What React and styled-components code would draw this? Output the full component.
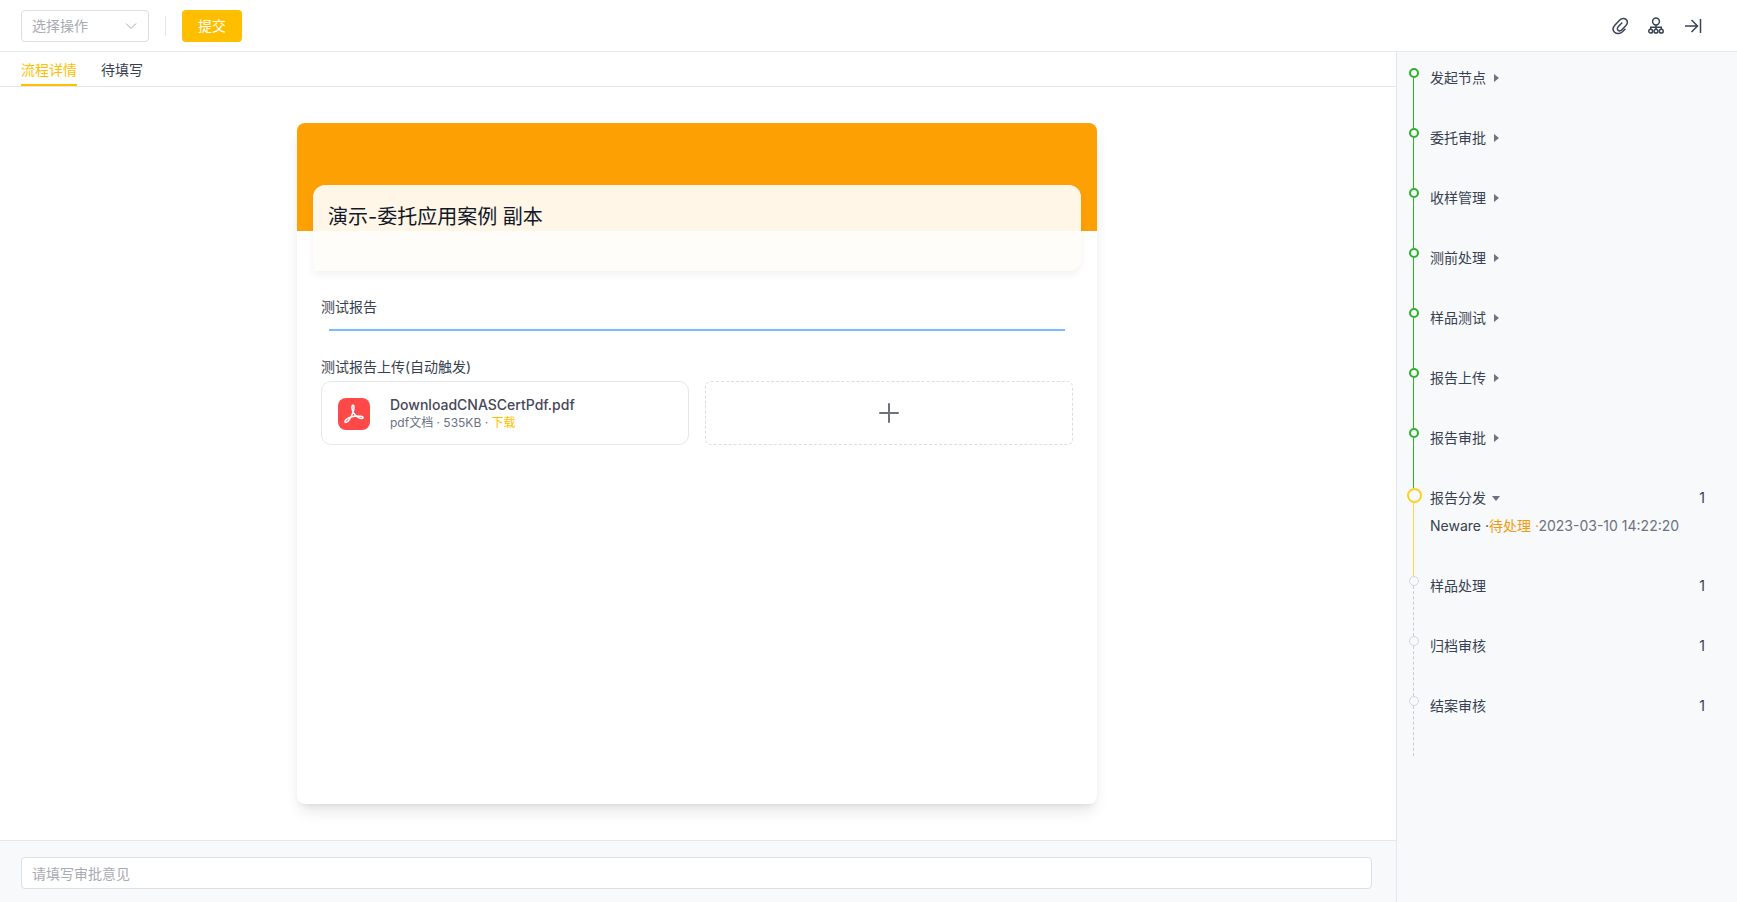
import React, { useState } from "react";
import styled, { createGlobalStyle, css } from "styled-components";

const colorPrimario = "#ffbf00";
const colorBorde = "#e4e7ed";
const colorFondo = "#f8f9fb";
const colorTexto = "#374151";
const colorGris = "#6b7280";

const GlobalStyle = createGlobalStyle`
  *, *::before, *::after {
    box-sizing: border-box;
  }
  body {
    margin: 0;
    font-family: Inter, "Noto Sans CJK SC", sans-serif;
    font-size: 14px;
    line-height: 20px;
    color: ${colorTexto};
    background: white;
  }
  button, input, select {
    font: inherit;
    color: inherit;
  }
  button {
    border: 0;
    padding: 0;
    background: none;
    cursor: pointer;
  }
  svg {
    display: block;
  }
`;

const Page = styled.div`
  display: flex;
  flex-direction: column;
  min-height: 100vh;
`;

const Toolbar = styled.header`
  display: flex;
  align-items: center;
  justify-content: space-between;
  padding: 10px 35px 9px 21px;
  border-bottom: 1px solid ${colorBorde};
`;

const Group = styled.div`
  display: flex;
  align-items: center;
  gap: ${({ $gap }) => $gap}px;
`;

const SelectBox = styled.label`
  display: grid;
  align-items: center;
  width: 128px;
  height: 32px;
  border: 1px solid #dcdfe6;
  border-radius: 4px;
  > * {
    grid-area: 1 / 1;
  }
  svg {
    justify-self: end;
    margin-right: 11px;
    pointer-events: none;
  }
`;

const Select = styled.select`
  appearance: none;
  width: 100%;
  height: 30px;
  padding: 0 30px 0 10px;
  border: 0;
  background: transparent;
  color: #a8abb2;
`;

const Separator = styled.span`
  width: 1px;
  height: 20px;
  background: ${colorBorde};
`;

const SubmitButton = styled.button`
  width: 60px;
  height: 32px;
  border-radius: 4px;
  background: ${colorPrimario};
  color: white;
`;

const Body = styled.div`
  display: flex;
  flex: 1;
`;

const Main = styled.main`
  display: flex;
  flex-direction: column;
  flex: 1;
  min-width: 0;
`;

const Tabs = styled.nav`
  display: flex;
  gap: 24px;
  padding: 0 21px;
  border-bottom: 1px solid ${colorBorde};
`;

const Tab = styled.button`
  height: 34px;
  padding-top: 4px;
  border-bottom: 2px solid transparent;
  ${({ $active }) =>
    $active &&
    css`
      color: ${colorPrimario};
      border-color: ${colorPrimario};
    `}
`;

const Canvas = styled.div`
  display: flex;
  justify-content: center;
  flex: 1;
  padding: 36px 26px 36px 24px;
`;

const Card = styled.section`
  width: 100%;
  max-width: 800px;
  border-radius: 8px;
  background: white;
  box-shadow: 0 10px 15px -3px rgba(0, 0, 0, 0.1),
    0 4px 6px -4px rgba(0, 0, 0, 0.1);
`;

const Banner = styled.div`
  padding: 62px 16px 0;
  border-radius: 8px 8px 0 0;
  background: linear-gradient(#fda004, #fda004) no-repeat 0 0 / 100% 108px;
`;

const Title = styled.h1`
  height: 86px;
  margin: 0;
  padding: 16px 15px;
  border-radius: 12px 12px 12px 0;
  background: rgba(255, 253, 249, 0.93);
  box-shadow: 0 4px 8px rgba(0, 0, 0, 0.05);
  color: #111827;
  font-size: 20px;
  line-height: 32px;
  font-weight: 400;
`;

const Fields = styled.div`
  padding: 26px 24px;
`;

const FieldTitle = styled.h2`
  margin: 0;
  font-size: 14px;
  line-height: 20px;
  font-weight: 400;
`;

const Divider = styled.hr`
  height: 2px;
  margin: 12px 8px 26px;
  border: 0;
  background: #79bbff;
`;

const Files = styled.div`
  display: grid;
  grid-template-columns: 1fr 1fr;
  gap: 16px;
  margin-top: 4px;
`;

const FileCard = styled.article`
  display: flex;
  align-items: center;
  gap: 20px;
  height: 64px;
  padding: 2px 16px 0;
  border: 1px solid #e5e7eb;
  border-radius: 10px;
`;

const FileName = styled.div`
  color: #44475b;
  font-weight: 500;
  line-height: 18px;
`;

const FileMeta = styled.div`
  color: ${colorGris};
  font-size: 12px;
  line-height: 18px;
  a {
    color: ${colorPrimario};
    text-decoration: none;
  }
`;

const AddButton = styled.button`
  display: flex;
  align-items: center;
  justify-content: center;
  height: 64px;
  border: 1px dashed #dcdce4;
  border-radius: 6px;
`;

const Footer = styled.footer`
  padding: 16px 24px 13px 21px;
  border-top: 1px solid ${colorBorde};
  background: ${colorFondo};
`;

const Comment = styled.input`
  display: block;
  width: 100%;
  height: 32px;
  padding: 0 10px;
  border: 1px solid #dcdfe6;
  border-radius: 4px;
  background: white;
  &::placeholder {
    color: #a8abb2;
  }
`;

const Aside = styled.aside`
  width: 341px;
  padding: 16px 32px 16px 10px;
  border-left: 1px solid ${colorBorde};
  background: ${colorFondo};
`;

const Steps = styled.ol`
  margin: 0;
  padding: 0;
  list-style: none;
`;

const Step = styled.li`
  display: flex;
  gap: 8px;
  min-height: ${({ $open }) => ($open ? 88 : 60)}px;
`;

const states = {
  done: css`
    --dot: 2px solid #2fb12f;
    --line: 1px solid #2fb12f;
  `,
  current: css`
    --dot: 2px solid #fdd022;
    --line: 1px solid #fdd35a;
  `,
  pending: css`
    --dot: 1px solid #d3d6dd;
    --line: 1px dashed #c8cbd2;
  `,
};

const Rail = styled.div`
  display: flex;
  flex-direction: column;
  width: 15px;
  ${({ $state }) => states[$state]}
  &::before {
    content: "";
    width: ${({ $state }) => ($state === "current" ? 15 : 10)}px;
    height: ${({ $state }) => ($state === "current" ? 15 : 10)}px;
    margin-left: ${({ $state }) => ($state === "current" ? 0 : 2)}px;
    border: var(--dot);
    border-radius: 50%;
  }
  &::after {
    content: "";
    flex: 1;
    margin-left: 6px;
    border-left: var(--line);
  }
`;

const StepBody = styled.div`
  flex: 1;
`;

const StepHead = styled.div`
  display: flex;
  justify-content: space-between;
`;

const StepToggle = styled.button`
  display: flex;
  align-items: center;
  gap: 8px;
`;

const Arrow = styled.span`
  border: 4px solid transparent;
  ${({ $open }) =>
    $open
      ? css`
          border-top: 5px solid ${colorGris};
          border-bottom: 0;
          margin-left: -2px;
        `
      : css`
          border-left: 5px solid ${colorGris};
          border-right: 0;
        `}
`;

const Detail = styled.p`
  margin: 8px 0 0;
  time {
    color: ${colorGris};
  }
`;

const Status = styled.span`
  color: #f29a0b;
`;

const steps = [
  { name: "发起节点", state: "done" },
  { name: "委托审批", state: "done" },
  { name: "收样管理", state: "done" },
  { name: "测前处理", state: "done" },
  { name: "样品测试", state: "done" },
  { name: "报告上传", state: "done" },
  { name: "报告审批", state: "done" },
  { name: "报告分发", state: "current", count: 1 },
  { name: "样品处理", state: "pending", count: 1 },
  { name: "归档审核", state: "pending", count: 1 },
  { name: "结案审核", state: "pending", count: 1 },
];

const ChevronIcon = () => (
  <svg width="12" height="12" viewBox="0 0 12 12" fill="none" stroke="#a8abb2">
    <path d="M1 3.5 6 8.5l5-5" />
  </svg>
);

const ClipIcon = () => (
  <svg width="16" height="18" viewBox="0 0 16 18" fill="none" stroke="#3a4356" strokeWidth="1.5" strokeLinecap="round">
    <path d="M13 12.200 10.200 15C8 17 4.600 17.200 2.600 15.300.5 13.300.8 10.400 2.800 8.200L7.300 3.400c2-2.100 5.200-2.500 6.900-.8 1.600 1.600 1.300 4.200-.5 6.200L9.900 12.700c-1.200 1.200-2.900 1.400-3.900.5s-.8-2.500.4-3.700L9.800 6" />
  </svg>
);

const TreeIcon = () => (
  <svg width="16" height="18" viewBox="0 0 16 18" fill="none" stroke="#3a4356" strokeWidth="1.5">
    <circle cx="8" cy="4.5" r="3.4" />
    <path d="M8 7.800V12M2.700 12v-1.800h10.600V12" />
    <circle cx="2.700" cy="14.200" r="1.900" />
    <circle cx="8" cy="14.200" r="1.900" />
    <circle cx="13.300" cy="14.200" r="1.900" />
  </svg>
);

const CollapseIcon = () => (
  <svg width="18" height="18" viewBox="0 0 18 18" fill="none" stroke="#3a4356" strokeWidth="1.5">
    <path d="M1 9h12.500M7.500 3l6 6-6 6M16.500 2v14" />
  </svg>
);

const PdfIcon = () => (
  <svg width="32" height="32" viewBox="0 0 32 32" fill="none">
    <rect width="32" height="32" rx="8" fill="#ff4848" />
    <path
      d="M14.800 7.200c1.600-.4 1.600 3.400.2 7-1.700 4.600-4.800 9.700-7 10.200-1.600.2-1.500-1.700.8-3.200 3.300-2.300 9.600-3.500 14-3 2.600.3 3.200 2.100 1.100 2.300-3.300.2-7.400-3.400-8.900-6.700-1.400-3.200-1.500-6.200-.2-6.600Z"
      stroke="white"
      strokeWidth="1.5"
      strokeLinejoin="round"
    />
  </svg>
);

const PlusIcon = () => (
  <svg width="20" height="20" viewBox="0 0 20 20" stroke={colorGris} strokeWidth="2" strokeLinecap="round">
    <path d="M1 10h18M10 1v18" />
  </svg>
);

const StepItem = ({ step }) => {
  const [open, setOpen] = useState(step.state === "current");
  const pending = step.state === "pending";

  return (
    <Step $open={open && step.state === "current"}>
      <Rail $state={step.state} />
      <StepBody>
        <StepHead>
          {pending ? (
            <span>{step.name}</span>
          ) : (
            <StepToggle aria-expanded={open} onClick={() => setOpen(!open)}>
              {step.name}
              <Arrow $open={open} />
            </StepToggle>
          )}
          {step.count && <span>{step.count}</span>}
        </StepHead>
        {open && step.state === "current" && (
          <Detail>
            Neware ·<Status>待处理 ·</Status>
            <time>2023-03-10 14:22:20</time>
          </Detail>
        )}
      </StepBody>
    </Step>
  );
};

const App = () => {
  const [tab, setTab] = useState("流程详情");

  return (
    <Page>
      <GlobalStyle />
      <Toolbar>
        <Group $gap={16}>
          <SelectBox>
            <Select aria-label="选择操作" defaultValue="">
              <option value="">选择操作</option>
            </Select>
            <ChevronIcon />
          </SelectBox>
          <Separator />
          <SubmitButton>提交</SubmitButton>
        </Group>
        <Group $gap={20}>
          <button aria-label="附件">
            <ClipIcon />
          </button>
          <button aria-label="流程图">
            <TreeIcon />
          </button>
          <button aria-label="收起">
            <CollapseIcon />
          </button>
        </Group>
      </Toolbar>
      <Body>
        <Main>
          <Tabs>
            {["流程详情", "待填写"].map((name) => (
              <Tab key={name} $active={tab === name} onClick={() => setTab(name)}>
                {name}
              </Tab>
            ))}
          </Tabs>
          <Canvas>
            <Card>
              <Banner>
                <Title>演示-委托应用案例 副本</Title>
              </Banner>
              <Fields>
                <FieldTitle>测试报告</FieldTitle>
                <Divider />
                <FieldTitle>测试报告上传(自动触发)</FieldTitle>
                <Files>
                  <FileCard>
                    <PdfIcon />
                    <div>
                      <FileName>DownloadCNASCertPdf.pdf</FileName>
                      <FileMeta>
                        pdf文档 · 535KB · <a href="#download">下载</a>
                      </FileMeta>
                    </div>
                  </FileCard>
                  <AddButton aria-label="上传文件">
                    <PlusIcon />
                  </AddButton>
                </Files>
              </Fields>
            </Card>
          </Canvas>
          <Footer>
            <Comment aria-label="审批意见" placeholder="请填写审批意见" />
          </Footer>
        </Main>
        <Aside>
          <Steps>
            {steps.map((step) => (
              <StepItem key={step.name} step={step} />
            ))}
          </Steps>
        </Aside>
      </Body>
    </Page>
  );
};

export default App;
